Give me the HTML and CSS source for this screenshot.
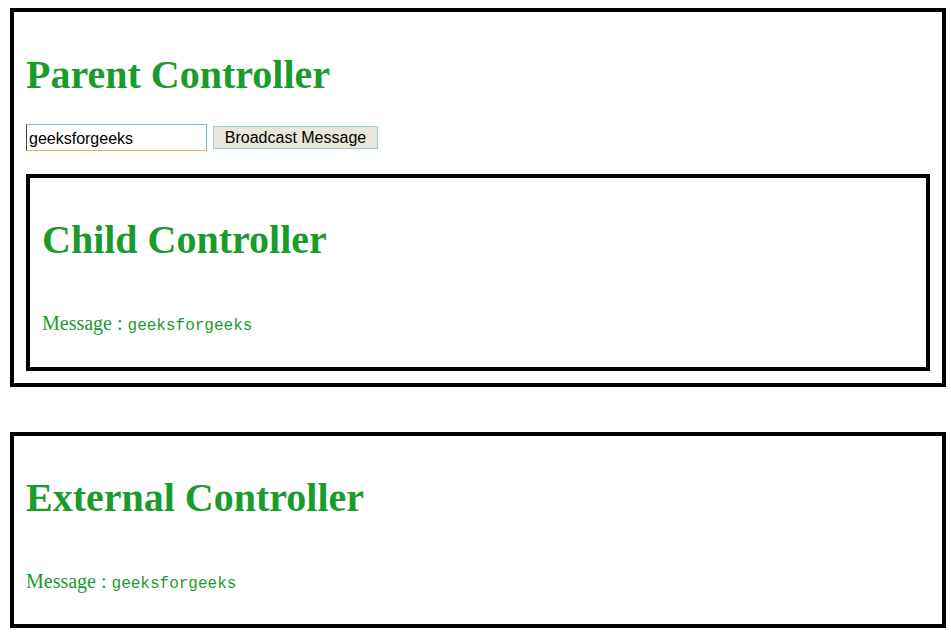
FILE: index.html
```html
<!DOCTYPE html>
<html>
<head>
<meta charset="utf-8">
<title>Controllers</title>
<link rel="stylesheet" href="styles.css">
</head>
<body>
<div class="panel panel-parent">
  <h1 class="title">Parent Controller</h1>
  <div class="controls">
    <input class="msg-input" type="text" value="geeksforgeeks">
    <button class="msg-btn">Broadcast Message</button>
  </div>
  <div class="panel panel-child">
    <h1 class="title">Child Controller</h1>
    <p class="message">Message : <code class="code">geeksforgeeks</code></p>
  </div>
</div>
<div class="panel panel-external">
  <h1 class="title">External Controller</h1>
  <p class="message">Message : <code class="code">geeksforgeeks</code></p>
</div>
</body>
</html>
```
FILE: styles.css
```css
html, body {
  background: #ffffff;
}
body {
  margin: 8px 5px 0 10px;
  font-family: "Liberation Serif", "Times New Roman", serif;
}
.panel {
  border: 4px solid #000;
  padding: 0 12px;
}
.panel-parent {
  padding-bottom: 12px;
}
.panel-child {
  padding-bottom: 29px;
}
.panel-external {
  margin-top: 45px;
  padding-bottom: 28px;
}
.title {
  font-family: "Liberation Serif", "Times New Roman", serif;
  font-weight: bold;
  font-size: 40px;
  line-height: 46px;
  color: #199c2b;
  margin: 40px 0 0 0;
}
.panel-child .title {
  margin-top: 39px;
}
.panel-external .title {
  margin-top: 39px;
}
.controls {
  display: flex;
  align-items: center;
  gap: 6px;
  margin: 26px 0 23px 0;
}
.msg-input {
  box-sizing: border-box;
  width: 181px;
  height: 27px;
  margin: 0;
  padding: 2px 2px 0 2px;
  font-family: "Liberation Sans", Arial, sans-serif;
  font-size: 16px;
  color: #000;
  border: 1px solid #7fb8c9;
  border-left-color: #444;
  border-bottom-color: #e3b84a;
  outline: none;
  background: #fff;
}
.msg-btn {
  box-sizing: border-box;
  width: 165px;
  height: 23px;
  margin: 0;
  padding: 1px 0 0 0;
  font-family: "Liberation Sans", Arial, sans-serif;
  font-size: 16px;
  color: #000;
  background: #e9e7da;
  border: 1px solid #9ad0dc;
  border-radius: 0;
}
.message {
  margin: 49px 0 0 0;
  font-family: "Liberation Serif", "Times New Roman", serif;
  font-size: 20px;
  line-height: 23px;
  color: #199c2b;
}
.code {
  font-family: "Liberation Mono", "Courier New", monospace;
  font-size: 16px;
  color: #199c2b;
}
```
